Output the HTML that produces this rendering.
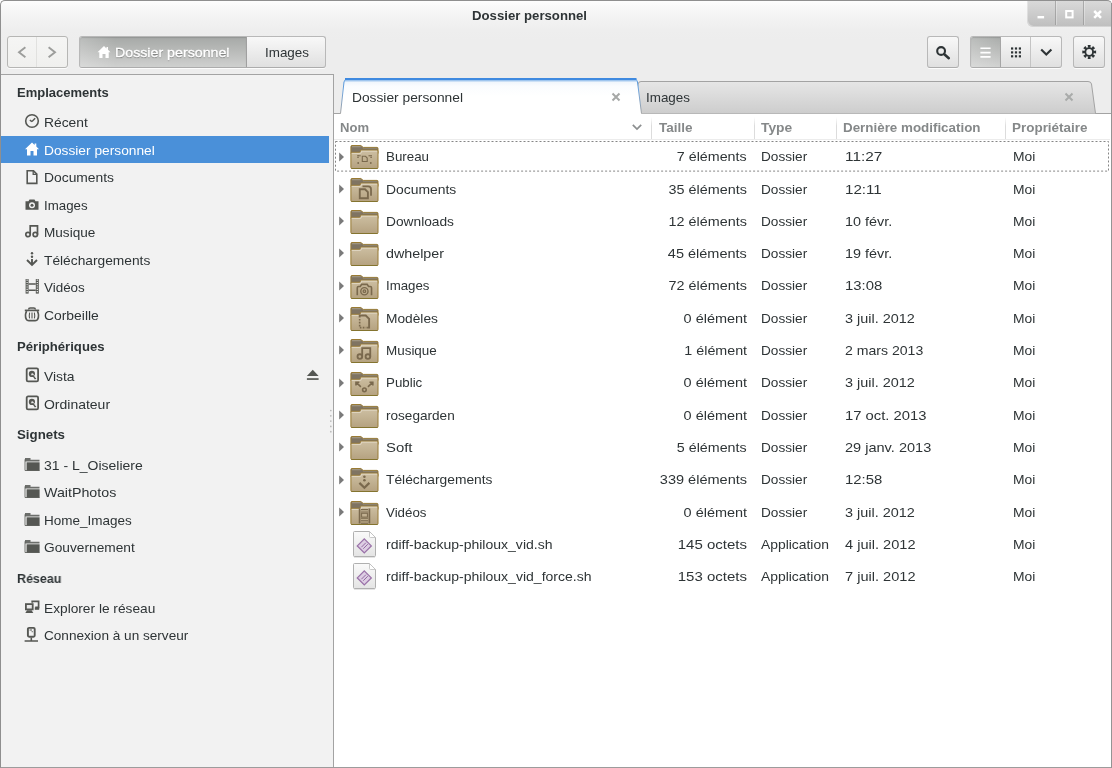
<!DOCTYPE html>
<html lang="fr"><head><meta charset="utf-8"><title>Dossier personnel</title>
<style>
html,body{margin:0;padding:0;background:#fff;}
body{width:1112px;height:768px;overflow:hidden;position:relative;font-family:"Liberation Sans", "DejaVu Sans", sans-serif;font-size:14px;color:#2e3436;}
#win{position:absolute;left:0;top:0;width:1112px;height:768px;overflow:hidden;background:#fff;}
.abs{position:absolute;}
.t{position:absolute;will-change:transform;transform-origin:0 50%;white-space:nowrap;line-height:20px;height:20px;font-size:13px;}
.b{font-weight:bold;}
.h{font-weight:bold;color:#858889;}
.w{color:#fff;}
svg{position:absolute;overflow:visible;}
.btn{position:absolute;box-sizing:border-box;border:1px solid #b8b8b8;border-bottom-color:#acacac;border-radius:3px;background:linear-gradient(#f8f8f8,#e0e0e0);box-shadow:0 1px 0 rgba(255,255,255,.8);}
.act{position:absolute;background:linear-gradient(90deg,rgba(255,255,255,.22),rgba(255,255,255,0) 36px),linear-gradient(#a6a9a7 0,#b4b6b4 35%,#cfd0cf 100%);box-shadow:inset 0 1px 1px rgba(0,0,0,.12);}
</style></head><body><div id="win">

<div class="abs" style="left:0;top:0;width:1112px;height:114px;background:#ededed;"></div>
<div class="abs" style="left:0;top:0;width:1112px;height:74px;background:linear-gradient(#fefefe 0,#f9f9f9 6px,#f3f3f3 17px,#eeeeee 30px,#ededed 40px);"></div>
<span class="t b" style="transform:scaleX(1.0138);top:6.00px;left:0.00px;left:471.5px;">Dossier personnel</span>
<div class="abs" style="left:1027px;top:1px;width:84px;height:26px;border-radius:0 0 0 6px;background:linear-gradient(#d9d9d9,#bebebe);box-shadow:inset 1px -1px 0 rgba(255,255,255,.35);"></div>
<div class="abs" style="left:1055px;top:1px;width:1px;height:24px;background:rgba(140,140,140,.6);box-shadow:1px 0 0 rgba(255,255,255,.3);"></div>
<div class="abs" style="left:1083px;top:1px;width:1px;height:24px;background:rgba(140,140,140,.6);box-shadow:1px 0 0 rgba(255,255,255,.3);"></div>
<svg style="left:1027px;top:1px" width="84" height="26" viewBox="0 0 84 26"><g fill="none" stroke="#fff" stroke-width="2"><path d="M10.5 16.2h6.6" stroke-width="2.4"/><rect x="39.2" y="10" width="6.4" height="6.4"/><path d="M67.2 10l6.8 6.8m0-6.8l-6.8 6.8" stroke-width="2.5"/></g></svg>
<div class="abs" style="left:0;top:74px;width:334px;height:1px;background:#a3a3a3;"></div>
<div class="btn" style="left:7px;top:36px;width:61px;height:32px;background:linear-gradient(#f5f5f4,#f0f0ee);border-color:#b6b6b4;"></div>
<div class="abs" style="left:36px;top:37px;width:1px;height:30px;background:#e1e1df;"></div>
<svg style="left:7px;top:36px" width="61" height="32" viewBox="0 0 61 32"><g fill="none" stroke="#9c9d9b" stroke-width="1.9"><path d="M18.4 11.3L12 16.3L18.4 21.3"/><path d="M41.6 11.3L48 16.3L41.6 21.3"/></g></svg>
<div class="btn" style="left:79px;top:36px;width:247px;height:32px;"></div>
<div class="act" style="left:80px;top:37px;width:166px;height:30px;border-radius:2px 0 0 2px;"></div>
<div class="abs" style="left:246px;top:37px;width:1px;height:30px;background:#a0a0a0;"></div>
<svg style="left:97px;top:45px" width="14" height="14" viewBox="0 0 14 14"><path d="M7 1L0.5 7.2H2.3V13H5.5V9H8.5V13H11.7V7.2H13.5L11 4.8V2H9.5V3.4Z" fill="#fff"/></svg>
<span class="t w" style="transform:scaleX(1.0928);top:43.00px;left:114.50px;text-shadow:0 1px 1px rgba(0,0,0,.38);-webkit-text-stroke:0.3px #fff;">Dossier personnel</span>
<span class="t " style="transform:scaleX(1.0319);top:43.00px;left:265.00px;">Images</span>
<div class="btn" style="left:927px;top:36px;width:32px;height:32px;"></div>
<svg style="left:927px;top:36px" width="32" height="32" viewBox="0 0 32 32"><circle cx="14.1" cy="15" r="3.9" fill="none" stroke="#2e3436" stroke-width="2.1"/><path d="M17.3 18.2l4.5 4" stroke="#2e3436" stroke-width="2.5" stroke-linecap="round"/></svg>
<div class="btn" style="left:970px;top:36px;width:92px;height:32px;"></div>
<div class="act" style="left:971px;top:37px;width:30px;height:30px;border-radius:2px 0 0 2px;"></div>
<div class="abs" style="left:1000px;top:37px;width:1px;height:30px;background:#a6a6a6;"></div>
<div class="abs" style="left:1030px;top:37px;width:1px;height:30px;background:#c4c4c4;"></div>
<svg style="left:970px;top:36px" width="92" height="32" viewBox="0 0 92 32"><g stroke="#fff" stroke-width="1.6"><path d="M10.4 12.3h10.2M10.4 16.6h10.2M10.4 20.9h10.2"/></g><g fill="#2e3436"><rect x="41.0" y="11.4" width="2.2" height="2.2"/><rect x="44.9" y="11.4" width="2.2" height="2.2"/><rect x="48.8" y="11.4" width="2.2" height="2.2"/><rect x="41.0" y="15.3" width="2.2" height="2.2"/><rect x="44.9" y="15.3" width="2.2" height="2.2"/><rect x="48.8" y="15.3" width="2.2" height="2.2"/><rect x="41.0" y="19.2" width="2.2" height="2.2"/><rect x="44.9" y="19.2" width="2.2" height="2.2"/><rect x="48.8" y="19.2" width="2.2" height="2.2"/></g><path d="M71.2 13.4l5.1 5.2l5.1-5.2" fill="none" stroke="#2e3436" stroke-width="2.1"/></svg>
<div class="btn" style="left:1073px;top:36px;width:32px;height:32px;"></div>
<svg style="left:1073px;top:36px" width="32" height="32" viewBox="0 0 32 32"><g transform="translate(16.2 16)"><g fill="#2e3436"><path d="M-1.5 -6.9L-1.1 -4.2H1.1L1.5 -6.9Z" transform="rotate(0)"/><path d="M-1.5 -6.9L-1.1 -4.2H1.1L1.5 -6.9Z" transform="rotate(45)"/><path d="M-1.5 -6.9L-1.1 -4.2H1.1L1.5 -6.9Z" transform="rotate(90)"/><path d="M-1.5 -6.9L-1.1 -4.2H1.1L1.5 -6.9Z" transform="rotate(135)"/><path d="M-1.5 -6.9L-1.1 -4.2H1.1L1.5 -6.9Z" transform="rotate(180)"/><path d="M-1.5 -6.9L-1.1 -4.2H1.1L1.5 -6.9Z" transform="rotate(225)"/><path d="M-1.5 -6.9L-1.1 -4.2H1.1L1.5 -6.9Z" transform="rotate(270)"/><path d="M-1.5 -6.9L-1.1 -4.2H1.1L1.5 -6.9Z" transform="rotate(315)"/></g><circle r="3.9" fill="none" stroke="#2e3436" stroke-width="1.9"/></g></svg>
<div class="abs" style="left:1px;top:75px;width:328px;height:692px;background:#f2f2f2;"></div>
<div class="abs" style="left:329px;top:75px;width:4px;height:692px;background:#f2f2f2;"></div>
<div class="abs" style="left:333px;top:74px;width:1px;height:694px;background:#a3a3a3;"></div>
<svg style="left:329px;top:408px" width="4" height="26" viewBox="0 0 4 26"><circle cx="1.8" cy="2.5" r="0.85" fill="#b9b9b9"/><circle cx="1.8" cy="7.8" r="0.85" fill="#b9b9b9"/><circle cx="1.8" cy="13.1" r="0.85" fill="#b9b9b9"/><circle cx="1.8" cy="18.4" r="0.85" fill="#b9b9b9"/><circle cx="1.8" cy="23.7" r="0.85" fill="#b9b9b9"/></svg>
<div class="abs" style="left:1px;top:136px;width:328px;height:27px;background:#4a90d9;"></div>
<span class="t b" style="transform:scaleX(0.9971);top:83.30px;left:17.00px;">Emplacements</span>
<svg style="left:24px;top:113.25px" width="16" height="16" viewBox="0 0 16 16"><circle cx="8" cy="8" r="6.3" fill="none" stroke="#555753" stroke-width="1.6"/><path d="M8 8.6L11.2 5.2M8 8.6L5.8 7.2" stroke="#555753" stroke-width="1.4" fill="none"/></svg>
<span class="t " style="transform:scaleX(1.0630);top:113.25px;left:43.50px;">Récent</span>
<svg style="left:24px;top:140.75px" width="16" height="16" viewBox="0 0 16 16"><path d="M8 1.5L1 8.2H3V14.5H6.5V10H9.5V14.5H13V8.2H15L12.3 5.6V2.5H10.6V4Z" fill="#fff"/></svg>
<span class="t w" style="transform:scaleX(1.0574);top:140.75px;left:43.50px;">Dossier personnel</span>
<svg style="left:24px;top:168.25px" width="16" height="16" viewBox="0 0 16 16"><g transform="translate(0 1)"><path d="M3.2 1.8H9.5L12.8 5.1V14.4H3.2Z" fill="none" stroke="#555753" stroke-width="1.6"/><path d="M9.2 2V5.4H12.6" fill="none" stroke="#555753" stroke-width="1.3"/></g></svg>
<span class="t " style="transform:scaleX(1.0654);top:168.25px;left:43.50px;">Documents</span>
<svg style="left:24px;top:195.75px" width="16" height="16" viewBox="0 0 16 16"><g transform="translate(0 0.7)"><path d="M1.5 4.5H4.5L5.5 2.8H10.5L11.5 4.5H14.5V13H1.5Z" fill="#555753"/><circle cx="8" cy="8.6" r="3" fill="#f2f2f2"/><circle cx="8" cy="8.6" r="1.5" fill="#555753"/></g></svg>
<span class="t " style="transform:scaleX(1.0213);top:195.75px;left:43.50px;">Images</span>
<svg style="left:24px;top:223.25px" width="16" height="16" viewBox="0 0 16 16"><g fill="none" stroke="#555753" stroke-width="1.7"><circle cx="4" cy="11.5" r="2.2"/><circle cx="11.3" cy="11.5" r="2.2"/><path d="M6.2 11.5V2.8H13.5V11.5"/></g></svg>
<span class="t " style="transform:scaleX(1.0439);top:223.25px;left:43.50px;">Musique</span>
<svg style="left:24px;top:250.75px" width="16" height="16" viewBox="0 0 16 16"><circle cx="8" cy="2.3" r="1.2" fill="#555753"/><circle cx="8" cy="5.8" r="1.2" fill="#555753"/><path d="M8 8V13M3 9L8 14L13 9" fill="none" stroke="#555753" stroke-width="1.9"/></svg>
<span class="t " style="transform:scaleX(1.0582);top:250.75px;left:43.50px;">Téléchargements</span>
<svg style="left:24px;top:278.40px" width="16" height="16" viewBox="0 0 16 16"><rect x="1.6" y="1" width="3" height="14.6" fill="#555753"/><rect x="11.8" y="1" width="3" height="14.6" fill="#555753"/><path d="M3.1 1.6V15.4M13.3 1.6V15.4" stroke="#f2f2f2" stroke-width="1.2" stroke-dasharray="1.1 1.2" fill="none"/><path d="M4.6 5.9H11.8M4.6 12.2H11.8" stroke="#555753" stroke-width="1.5" fill="none"/></svg>
<span class="t " style="transform:scaleX(1.0325);top:278.40px;left:43.50px;">Vidéos</span>
<svg style="left:24px;top:306.00px" width="16" height="16" viewBox="0 0 16 16"><g fill="none" stroke="#555753"><path d="M4.6 3.6Q4.6 2 6.2 2H9.8Q11.4 2 11.4 3.6" stroke-width="1.4"/><path d="M0.8 4.4H15.2" stroke-width="1.7"/><path d="M2.6 5.2Q0.4 9.8 2.4 13.4Q3.1 14.7 4.8 14.7H11.2Q12.9 14.7 13.6 13.4Q15.6 9.8 13.4 5.2" stroke-width="1.7"/><path d="M5.6 6.6Q5 9.6 5.6 12.4M8 6.6V12.4M10.4 6.6Q11 9.6 10.4 12.4" stroke-width="1.1"/></g></svg>
<span class="t " style="transform:scaleX(1.0680);top:306.00px;left:43.50px;">Corbeille</span>
<span class="t b" style="transform:scaleX(1.0092);top:336.50px;left:17.00px;">Périphériques</span>
<svg style="left:24px;top:367.00px" width="16" height="16" viewBox="0 0 16 16"><rect x="2.7" y="1.4" width="11.4" height="13" rx="1.4" fill="none" stroke="#555753" stroke-width="1.8"/><circle cx="7.9" cy="6.9" r="3.1" fill="#555753"/><circle cx="8.3" cy="7.4" r="1.1" fill="#e6e6e6"/><path d="M8.8 8L11.6 12" stroke="#555753" stroke-width="1.7"/><path d="M9.3 7.2L12 11" stroke="#f2f2f2" stroke-width=".7"/></svg>
<span class="t " style="transform:scaleX(1.0655);top:367.00px;left:43.50px;">Vista</span>
<svg style="left:24px;top:394.75px" width="16" height="16" viewBox="0 0 16 16"><rect x="2.7" y="1.4" width="11.4" height="13" rx="1.4" fill="none" stroke="#555753" stroke-width="1.8"/><circle cx="7.9" cy="6.9" r="3.1" fill="#555753"/><circle cx="8.3" cy="7.4" r="1.1" fill="#e6e6e6"/><path d="M8.8 8L11.6 12" stroke="#555753" stroke-width="1.7"/><path d="M9.3 7.2L12 11" stroke="#f2f2f2" stroke-width=".7"/></svg>
<span class="t " style="transform:scaleX(1.0753);top:394.75px;left:43.50px;">Ordinateur</span>
<span class="t b" style="transform:scaleX(1.0220);top:425.25px;left:17.00px;">Signets</span>
<svg style="left:24px;top:455.50px" width="16" height="16" viewBox="0 0 16 16"><path d="M1 2H6.5V3.8H15.5V5.5H1Z" fill="#555753" opacity=".85"/><path d="M1 3.3V14.5H15.5" fill="none" stroke="#555753" stroke-width="1" opacity=".8"/><rect x="2.6" y="6.3" width="13" height="8.4" fill="#555753"/></svg>
<span class="t " style="transform:scaleX(1.0765);top:455.50px;left:43.50px;">31 - L_Oiseliere</span>
<svg style="left:24px;top:483.00px" width="16" height="16" viewBox="0 0 16 16"><path d="M1 2H6.5V3.8H15.5V5.5H1Z" fill="#555753" opacity=".85"/><path d="M1 3.3V14.5H15.5" fill="none" stroke="#555753" stroke-width="1" opacity=".8"/><rect x="2.6" y="6.3" width="13" height="8.4" fill="#555753"/></svg>
<span class="t " style="transform:scaleX(1.0955);top:483.00px;left:43.50px;">WaitPhotos</span>
<svg style="left:24px;top:510.50px" width="16" height="16" viewBox="0 0 16 16"><path d="M1 2H6.5V3.8H15.5V5.5H1Z" fill="#555753" opacity=".85"/><path d="M1 3.3V14.5H15.5" fill="none" stroke="#555753" stroke-width="1" opacity=".8"/><rect x="2.6" y="6.3" width="13" height="8.4" fill="#555753"/></svg>
<span class="t " style="transform:scaleX(1.0385);top:510.50px;left:43.50px;">Home_Images</span>
<svg style="left:24px;top:538.00px" width="16" height="16" viewBox="0 0 16 16"><path d="M1 2H6.5V3.8H15.5V5.5H1Z" fill="#555753" opacity=".85"/><path d="M1 3.3V14.5H15.5" fill="none" stroke="#555753" stroke-width="1" opacity=".8"/><rect x="2.6" y="6.3" width="13" height="8.4" fill="#555753"/></svg>
<span class="t " style="transform:scaleX(1.0558);top:538.00px;left:43.50px;">Gouvernement</span>
<span class="t b" style="transform:scaleX(0.9622);top:568.50px;left:17.00px;">Réseau</span>
<svg style="left:24px;top:599.00px" width="16" height="16" viewBox="0 0 16 16"><rect x="1.9" y="5.1" width="6.8" height="5.3" fill="#e9e9e9" stroke="#555753" stroke-width="1.8"/><path d="M3 11.3L1.3 14H9.3L7.6 11.3Z" fill="#555753"/><path d="M8.2 3.8V2.4H14.6V8.3H11.2" fill="none" stroke="#555753" stroke-width="1.7"/><rect x="10.8" y="8.4" width="4.4" height="2.4" fill="#555753"/></svg>
<span class="t " style="transform:scaleX(1.0550);top:599.00px;left:43.50px;">Explorer le réseau</span>
<svg style="left:24px;top:626.00px" width="16" height="16" viewBox="0 0 16 16"><g fill="none" stroke="#555753"><rect x="3.9" y="1.9" width="6.8" height="8.9" rx="1.2" stroke-width="1.9"/><path d="M5.6 4H8" stroke-width="1"/><path d="M7.3 11.4V14.6M0.6 15H14" stroke-width="1.6"/></g><circle cx="8.2" cy="5.7" r=".6" fill="#555753"/></svg>
<span class="t " style="transform:scaleX(1.0454);top:626.00px;left:43.50px;">Connexion à un serveur</span>
<svg style="left:305px;top:368px" width="14" height="14" viewBox="0 0 14 14"><path d="M7.75 1.8L13.6 8.1H1.9Z" fill="#555753"/><rect x="1.9" y="10.2" width="11.7" height="1.7" fill="#555753"/></svg>
<div class="abs" style="left:334px;top:113px;width:777px;height:1px;background:#a3a3a3;"></div>
<svg style="left:634px;top:80px" width="464" height="34" viewBox="0 0 464 34"><defs><linearGradient id="tg" x1="0" y1="0" x2="0" y2="1"><stop offset="0" stop-color="#e6e6e6"/><stop offset="1" stop-color="#cdcdcd"/></linearGradient></defs><path d="M0 33.5L4 4Q4.5 1.5 7 1.5H454Q457 1.5 457.5 4L461.5 33.5" fill="url(#tg)" stroke="#a3a3a3" stroke-width="1"/></svg>
<svg style="left:338px;top:77px" width="306" height="38" viewBox="0 0 306 38"><defs><linearGradient id="ta" x1="0" y1="0" x2="0" y2="1"><stop offset="0" stop-color="#e9f1fa"/><stop offset=".2" stop-color="#fafcfe"/><stop offset=".5" stop-color="#fff"/></linearGradient><linearGradient id="tb" x1="0" y1="0" x2="0" y2="1"><stop offset="0" stop-color="#4a90d9"/><stop offset=".35" stop-color="#6ea3dc"/><stop offset="1" stop-color="#a3a3a3"/></linearGradient></defs><path d="M2.5 37L6 5Q6.5 2 9.5 2H296Q299 2 299.5 5L303.5 37Z" fill="url(#ta)"/><path d="M2.5 36.5L6 5Q6.5 2 9.5 2H296Q299 2 299.5 5L303.5 36.5" fill="none" stroke="url(#tb)" stroke-width="1"/><path d="M7 2.2H298.5" stroke="#3f8ae0" stroke-width="2.4"/><path d="M6.5 4H299" stroke="#a9cbf0" stroke-width="1.2"/></svg>
<span class="t " style="transform:scaleX(1.0593);top:88.00px;left:352.30px;">Dossier personnel</span>
<span class="t " style="transform:scaleX(1.0319);top:88.00px;left:646.00px;">Images</span>
<svg style="left:611px;top:92px" width="10" height="10" viewBox="0 0 10 10"><path d="M1.5 1.5l7 7m0-7l-7 7" stroke="#a6a8a7" stroke-width="2" fill="none"/></svg>
<svg style="left:1064px;top:91.5px" width="10" height="10" viewBox="0 0 10 10"><path d="M1.5 1.5l7 7m0-7l-7 7" stroke="#a9abaa" stroke-width="2" fill="none"/></svg>
<span class="t h" style="transform:scaleX(1.0038);top:118.00px;left:340.00px;">Nom</span>
<span class="t h" style="transform:scaleX(1.0378);top:118.00px;left:659.00px;">Taille</span>
<span class="t h" style="transform:scaleX(1.0616);top:118.00px;left:761.25px;">Type</span>
<span class="t h" style="transform:scaleX(1.0289);top:118.00px;left:843.20px;">Dernière modification</span>
<span class="t h" style="transform:scaleX(1.0345);top:118.00px;left:1011.50px;">Propriétaire</span>
<div class="abs" style="left:651px;top:117px;width:1px;height:22px;background:linear-gradient(rgba(0,0,0,0),#dcdcdc 40%,#dcdcdc);"></div>
<div class="abs" style="left:754px;top:117px;width:1px;height:22px;background:linear-gradient(rgba(0,0,0,0),#dcdcdc 40%,#dcdcdc);"></div>
<div class="abs" style="left:836px;top:117px;width:1px;height:22px;background:linear-gradient(rgba(0,0,0,0),#dcdcdc 40%,#dcdcdc);"></div>
<div class="abs" style="left:1005px;top:117px;width:1px;height:22px;background:linear-gradient(rgba(0,0,0,0),#dcdcdc 40%,#dcdcdc);"></div>
<svg style="left:631px;top:122px" width="12" height="10" viewBox="0 0 12 10"><path d="M1.8 2.8l4.2 4.2l4.2-4.2" fill="none" stroke="#8c8f90" stroke-width="1.7"/></svg>
<div class="abs" style="left:334px;top:139px;width:776px;height:1px;background:#ececec;"></div>
<svg style="left:335px;top:141.3px" width="774" height="31" viewBox="0 0 774 31"><rect x="0.5" y="0.5" width="773" height="29.6" fill="none" stroke="#858585" stroke-width="1" stroke-dasharray="2 2"/></svg>
<svg width="0" height="0" style="left:0;top:0"><defs>
<linearGradient id="fg" x1="0" y1="0" x2="0" y2="1"><stop offset="0" stop-color="#cdbfa2"/><stop offset="1" stop-color="#b5a280"/></linearGradient>
<linearGradient id="pg" x1="0" y1="0" x2="0" y2="1"><stop offset="0" stop-color="#fafafa"/><stop offset="1" stop-color="#e4e4e4"/></linearGradient>
<g id="fold"><path d="M0.9 8.5V1.6Q0.9 0.5 2 0.5H10.8L13.2 2.4H27Q28 2.4 28 3.4V8.5Z" fill="#7f7462" stroke="#9a7b33" stroke-width="1"/><path d="M2 1.7H10.6" stroke="#a59a86" stroke-width="1.1"/><path d="M13 3.4H27" stroke="#8f8573" stroke-width="1"/><path d="M0.9 8.3Q0.9 7.3 1.9 7.3H9.5Q10.4 7.3 10.4 6.4V6Q10.4 5.1 11.3 5.1H27Q28 5.1 28 6.1V22.5Q28 23.5 27 23.5H1.9Q0.9 23.5 0.9 22.5Z" fill="url(#fg)" stroke="#987a34" stroke-width="1"/><path d="M1.9 8.4H10.2Q11.4 8.4 11.4 7.3V6.2H27" fill="none" stroke="#e2d9c6" stroke-width="1" opacity=".9"/><path d="M1.4 23.5H27.5" stroke="#84742f" stroke-width="1"/></g>
<g id="page"><path d="M1 25.9H22" stroke="#c9c9c9" stroke-width="1.2"/><path d="M0.5 1.5Q0.5 0.5 1.5 0.5H16.5L22.5 6.5V24.5Q22.5 25.5 21.5 25.5H1.5Q0.5 25.5 0.5 24.5Z" fill="url(#pg)" stroke="#b0b0b0" stroke-width="1"/><path d="M16.5 0.5V5.5Q16.5 6.5 17.5 6.5H22.5Z" fill="#fff" stroke="#bdbdbd" stroke-width=".8"/><path d="M11.3 7.9L18.3 14.9L11.3 21.9L4.3 14.9Z" fill="#ddcde3" stroke="#9a72a8" stroke-width="1.3"/><path d="M8.4 16.2L12.9 11.7M10.3 17.7L14.8 13.2" stroke="#8a5f9a" stroke-width=".9"/></g>
</defs></svg>
<svg style="left:338.5px;top:151.50px" width="6" height="10" viewBox="0 0 6 10"><path d="M0.2 0.4L5 5L0.2 9.6Z" fill="#7a7a7a"/></svg>
<svg style="left:349.6px;top:145.40px" width="29" height="24" viewBox="0 0 29 24"><use href="#fold"/><g fill="none" stroke="#7a694d" stroke-width="1.1"><path d="M12.3 16.5V11.3H15.5L17.2 13V16.5Z"/></g><g fill="#7a694d"><rect x="7.3" y="10" width="1.6" height="1.4"/><rect x="9.3" y="10" width="1.2" height="1.4"/><rect x="7.3" y="11.8" width="1.4" height="1.2"/><rect x="18.6" y="10" width="1.2" height="1.4"/><rect x="20.2" y="10" width="1.6" height="1.4"/><rect x="20.4" y="11.8" width="1.4" height="1.2"/><circle cx="8.2" cy="18" r="0.9"/><circle cx="20.8" cy="18" r="0.9"/></g></svg>
<span class="t " style="transform:scaleX(1.0257);top:147.25px;left:385.80px;">Bureau</span>
<span class="t " style="transform:scaleX(1.0968);top:147.25px;right:365.30px;transform-origin:100% 50%;">7 éléments</span>
<span class="t " style="transform:scaleX(1.0481);top:147.25px;left:761.30px;">Dossier</span>
<span class="t " style="transform:scaleX(1.1796);top:147.25px;left:844.80px;">11:27</span>
<span class="t " style="transform:scaleX(1.0643);top:147.25px;left:1012.60px;">Moi</span>
<svg style="left:338.5px;top:183.80px" width="6" height="10" viewBox="0 0 6 10"><path d="M0.2 0.4L5 5L0.2 9.6Z" fill="#7a7a7a"/></svg>
<svg style="left:349.6px;top:177.70px" width="29" height="24" viewBox="0 0 29 24"><use href="#fold"/><g transform="translate(14.4 14.6) scale(1.25) translate(-14.5 -15)"><g fill="none" stroke="#7a694d" stroke-width="1.5"><path d="M10.8 19.5V12.3H15L17.3 14.6V19.5Z"/><path d="M13 10H17.5Q19.8 10 19.8 12.3V17.5" stroke-width="1.4"/></g></g></svg>
<span class="t " style="transform:scaleX(1.0684);top:179.55px;left:385.80px;">Documents</span>
<span class="t " style="transform:scaleX(1.1048);top:179.55px;right:365.30px;transform-origin:100% 50%;">35 éléments</span>
<span class="t " style="transform:scaleX(1.0481);top:179.55px;left:761.30px;">Dossier</span>
<span class="t " style="transform:scaleX(1.1638);top:179.55px;left:844.80px;">12:11</span>
<span class="t " style="transform:scaleX(1.0643);top:179.55px;left:1012.60px;">Moi</span>
<svg style="left:338.5px;top:216.10px" width="6" height="10" viewBox="0 0 6 10"><path d="M0.2 0.4L5 5L0.2 9.6Z" fill="#7a7a7a"/></svg>
<svg style="left:349.6px;top:210.00px" width="29" height="24" viewBox="0 0 29 24"><use href="#fold"/></svg>
<span class="t " style="transform:scaleX(1.0571);top:211.85px;left:385.80px;">Downloads</span>
<span class="t " style="transform:scaleX(1.1048);top:211.85px;right:365.30px;transform-origin:100% 50%;">12 éléments</span>
<span class="t " style="transform:scaleX(1.0481);top:211.85px;left:761.30px;">Dossier</span>
<span class="t " style="transform:scaleX(1.1081);top:211.85px;left:844.80px;">10 févr.</span>
<span class="t " style="transform:scaleX(1.0643);top:211.85px;left:1012.60px;">Moi</span>
<svg style="left:338.5px;top:248.40px" width="6" height="10" viewBox="0 0 6 10"><path d="M0.2 0.4L5 5L0.2 9.6Z" fill="#7a7a7a"/></svg>
<svg style="left:349.6px;top:242.30px" width="29" height="24" viewBox="0 0 29 24"><use href="#fold"/></svg>
<span class="t " style="transform:scaleX(1.0992);top:244.15px;left:385.80px;">dwhelper</span>
<span class="t " style="transform:scaleX(1.1154);top:244.15px;right:365.30px;transform-origin:100% 50%;">45 éléments</span>
<span class="t " style="transform:scaleX(1.0481);top:244.15px;left:761.30px;">Dossier</span>
<span class="t " style="transform:scaleX(1.1081);top:244.15px;left:844.80px;">19 févr.</span>
<span class="t " style="transform:scaleX(1.0643);top:244.15px;left:1012.60px;">Moi</span>
<svg style="left:338.5px;top:280.70px" width="6" height="10" viewBox="0 0 6 10"><path d="M0.2 0.4L5 5L0.2 9.6Z" fill="#7a7a7a"/></svg>
<svg style="left:349.6px;top:274.60px" width="29" height="24" viewBox="0 0 29 24"><use href="#fold"/><g transform="translate(14.4 14.6) scale(1.25) translate(-14.5 -15)"><g fill="none" stroke="#7a694d"><path d="M8.8 19.5V13.5Q8.8 12.5 9.8 12.5H11.2L12.3 10.8H16.7L17.8 12.5H19.2Q20.2 12.5 20.2 13.5V19.5" stroke-width="1.3"/><circle cx="14.5" cy="16.3" r="2.9" stroke-width="1.1"/><circle cx="14.5" cy="16.3" r="1" stroke-width="1"/></g></g></svg>
<span class="t " style="transform:scaleX(1.0202);top:276.45px;left:385.80px;">Images</span>
<span class="t " style="transform:scaleX(1.1048);top:276.45px;right:365.30px;transform-origin:100% 50%;">72 éléments</span>
<span class="t " style="transform:scaleX(1.0481);top:276.45px;left:761.30px;">Dossier</span>
<span class="t " style="transform:scaleX(1.1445);top:276.45px;left:844.80px;">13:08</span>
<span class="t " style="transform:scaleX(1.0643);top:276.45px;left:1012.60px;">Moi</span>
<svg style="left:338.5px;top:313.00px" width="6" height="10" viewBox="0 0 6 10"><path d="M0.2 0.4L5 5L0.2 9.6Z" fill="#7a7a7a"/></svg>
<svg style="left:349.6px;top:306.90px" width="29" height="24" viewBox="0 0 29 24"><use href="#fold"/><g transform="translate(14.4 14.6) scale(1.35) translate(-14.5 -15)"><g fill="none" stroke="#7a694d"><path d="M11 12V10.5H15.5L18 13V19.5H16.5" stroke-width="1.4"/><path d="M11 13V19.5H16" stroke-width="1.2" stroke-dasharray="1.2 1"/></g></g></svg>
<span class="t " style="transform:scaleX(1.0562);top:308.75px;left:385.80px;">Modèles</span>
<span class="t " style="transform:scaleX(1.1122);top:308.75px;right:365.30px;transform-origin:100% 50%;">0 élément</span>
<span class="t " style="transform:scaleX(1.0481);top:308.75px;left:761.30px;">Dossier</span>
<span class="t " style="transform:scaleX(1.1091);top:308.75px;left:844.80px;">3 juil. 2012</span>
<span class="t " style="transform:scaleX(1.0643);top:308.75px;left:1012.60px;">Moi</span>
<svg style="left:338.5px;top:345.30px" width="6" height="10" viewBox="0 0 6 10"><path d="M0.2 0.4L5 5L0.2 9.6Z" fill="#7a7a7a"/></svg>
<svg style="left:349.6px;top:339.20px" width="29" height="24" viewBox="0 0 29 24"><use href="#fold"/><g transform="translate(14.4 14.6) scale(1.3) translate(-14.5 -15)"><g fill="none" stroke="#7a694d" stroke-width="1.4"><circle cx="11" cy="17.3" r="1.8"/><circle cx="17.2" cy="17.3" r="1.8"/><path d="M12.8 17.3V10.8H19V17.3"/></g></g></svg>
<span class="t " style="transform:scaleX(1.0338);top:341.05px;left:385.80px;">Musique</span>
<span class="t " style="transform:scaleX(1.0991);top:341.05px;right:365.30px;transform-origin:100% 50%;">1 élément</span>
<span class="t " style="transform:scaleX(1.0481);top:341.05px;left:761.30px;">Dossier</span>
<span class="t " style="transform:scaleX(1.0828);top:341.05px;left:844.80px;">2 mars 2013</span>
<span class="t " style="transform:scaleX(1.0643);top:341.05px;left:1012.60px;">Moi</span>
<svg style="left:338.5px;top:377.60px" width="6" height="10" viewBox="0 0 6 10"><path d="M0.2 0.4L5 5L0.2 9.6Z" fill="#7a7a7a"/></svg>
<svg style="left:349.6px;top:371.50px" width="29" height="24" viewBox="0 0 29 24"><use href="#fold"/><g transform="translate(14.4 14.6) scale(1.3) translate(-14.5 -15)"><g fill="none" stroke="#7a694d" stroke-width="1.2"><circle cx="14.5" cy="17.5" r="1.4"/><path d="M11.8 15.2L8.2 11.8M8 14.2V11.6H10.6M17.2 15.2L20.8 11.8M21 14.2V11.6H18.4"/></g></g></svg>
<span class="t " style="transform:scaleX(1.0248);top:373.35px;left:385.80px;">Public</span>
<span class="t " style="transform:scaleX(1.1122);top:373.35px;right:365.30px;transform-origin:100% 50%;">0 élément</span>
<span class="t " style="transform:scaleX(1.0481);top:373.35px;left:761.30px;">Dossier</span>
<span class="t " style="transform:scaleX(1.1091);top:373.35px;left:844.80px;">3 juil. 2012</span>
<span class="t " style="transform:scaleX(1.0643);top:373.35px;left:1012.60px;">Moi</span>
<svg style="left:338.5px;top:409.90px" width="6" height="10" viewBox="0 0 6 10"><path d="M0.2 0.4L5 5L0.2 9.6Z" fill="#7a7a7a"/></svg>
<svg style="left:349.6px;top:403.80px" width="29" height="24" viewBox="0 0 29 24"><use href="#fold"/></svg>
<span class="t " style="transform:scaleX(1.0444);top:405.65px;left:385.80px;">rosegarden</span>
<span class="t " style="transform:scaleX(1.1122);top:405.65px;right:365.30px;transform-origin:100% 50%;">0 élément</span>
<span class="t " style="transform:scaleX(1.0481);top:405.65px;left:761.30px;">Dossier</span>
<span class="t " style="transform:scaleX(1.1389);top:405.65px;left:844.80px;">17 oct. 2013</span>
<span class="t " style="transform:scaleX(1.0643);top:405.65px;left:1012.60px;">Moi</span>
<svg style="left:338.5px;top:442.20px" width="6" height="10" viewBox="0 0 6 10"><path d="M0.2 0.4L5 5L0.2 9.6Z" fill="#7a7a7a"/></svg>
<svg style="left:349.6px;top:436.10px" width="29" height="24" viewBox="0 0 29 24"><use href="#fold"/></svg>
<span class="t " style="transform:scaleX(1.1459);top:437.95px;left:385.80px;">Soft</span>
<span class="t " style="transform:scaleX(1.0968);top:437.95px;right:365.30px;transform-origin:100% 50%;">5 éléments</span>
<span class="t " style="transform:scaleX(1.0481);top:437.95px;left:761.30px;">Dossier</span>
<span class="t " style="transform:scaleX(1.1185);top:437.95px;left:844.80px;">29 janv. 2013</span>
<span class="t " style="transform:scaleX(1.0643);top:437.95px;left:1012.60px;">Moi</span>
<svg style="left:338.5px;top:474.50px" width="6" height="10" viewBox="0 0 6 10"><path d="M0.2 0.4L5 5L0.2 9.6Z" fill="#7a7a7a"/></svg>
<svg style="left:349.6px;top:468.40px" width="29" height="24" viewBox="0 0 29 24"><use href="#fold"/><g transform="translate(14.4 14.6) scale(1.35) translate(-14.5 -15)"><g fill="#7a694d"><circle cx="14.5" cy="10.6" r="0.95"/><circle cx="14.5" cy="13.3" r="0.95"/></g><path d="M10.8 15.2L14.5 18.8L18.2 15.2" fill="none" stroke="#7a694d" stroke-width="1.6"/></g></svg>
<span class="t " style="transform:scaleX(1.0602);top:470.25px;left:385.80px;">Téléchargements</span>
<span class="t " style="transform:scaleX(1.1177);top:470.25px;right:365.30px;transform-origin:100% 50%;">339 éléments</span>
<span class="t " style="transform:scaleX(1.0481);top:470.25px;left:761.30px;">Dossier</span>
<span class="t " style="transform:scaleX(1.1445);top:470.25px;left:844.80px;">12:58</span>
<span class="t " style="transform:scaleX(1.0643);top:470.25px;left:1012.60px;">Moi</span>
<svg style="left:338.5px;top:506.80px" width="6" height="10" viewBox="0 0 6 10"><path d="M0.2 0.4L5 5L0.2 9.6Z" fill="#7a7a7a"/></svg>
<svg style="left:349.6px;top:500.70px" width="29" height="24" viewBox="0 0 29 24"><use href="#fold"/><g fill="none" stroke="#7a694d"><path d="M9.6 7.5V22.5M19.4 7.5V22.5" stroke-width="1.7"/><path d="M11 8.6H18M11 11H18M11 17.3H18M11 19.8H18M11 22.2H18" stroke-width="1.1"/><rect x="11.6" y="12.3" width="5.8" height="3.8" stroke-width="1"/></g></svg>
<span class="t " style="transform:scaleX(1.0249);top:502.55px;left:385.80px;">Vidéos</span>
<span class="t " style="transform:scaleX(1.1122);top:502.55px;right:365.30px;transform-origin:100% 50%;">0 élément</span>
<span class="t " style="transform:scaleX(1.0481);top:502.55px;left:761.30px;">Dossier</span>
<span class="t " style="transform:scaleX(1.1091);top:502.55px;left:844.80px;">3 juil. 2012</span>
<span class="t " style="transform:scaleX(1.0643);top:502.55px;left:1012.60px;">Moi</span>
<svg style="left:352.8px;top:531.10px" width="23" height="26" viewBox="0 0 23 26"><use href="#page"/></svg>
<span class="t " style="transform:scaleX(1.0783);top:534.85px;left:385.80px;">rdiff-backup-philoux_vid.sh</span>
<span class="t " style="transform:scaleX(1.1542);top:534.85px;right:365.30px;transform-origin:100% 50%;">145 octets</span>
<span class="t " style="transform:scaleX(1.0675);top:534.85px;left:761.30px;">Application</span>
<span class="t " style="transform:scaleX(1.1210);top:534.85px;left:844.80px;">4 juil. 2012</span>
<span class="t " style="transform:scaleX(1.0643);top:534.85px;left:1012.60px;">Moi</span>
<svg style="left:352.8px;top:563.40px" width="23" height="26" viewBox="0 0 23 26"><use href="#page"/></svg>
<span class="t " style="transform:scaleX(1.0786);top:567.15px;left:385.80px;">rdiff-backup-philoux_vid_force.sh</span>
<span class="t " style="transform:scaleX(1.1542);top:567.15px;right:365.30px;transform-origin:100% 50%;">153 octets</span>
<span class="t " style="transform:scaleX(1.0675);top:567.15px;left:761.30px;">Application</span>
<span class="t " style="transform:scaleX(1.1210);top:567.15px;left:844.80px;">7 juil. 2012</span>
<span class="t " style="transform:scaleX(1.0643);top:567.15px;left:1012.60px;">Moi</span>
<div class="abs" style="left:0;top:0;width:1112px;height:768px;box-sizing:border-box;border:1px solid #8f8f8f;border-bottom-color:#9c9c9c;border-right-width:0;border-radius:5px 5px 0 0;pointer-events:none;"></div>
<div class="abs" style="left:1110.5px;top:3px;width:1.5px;height:765px;background:#949494;"></div>
</div></body></html>
